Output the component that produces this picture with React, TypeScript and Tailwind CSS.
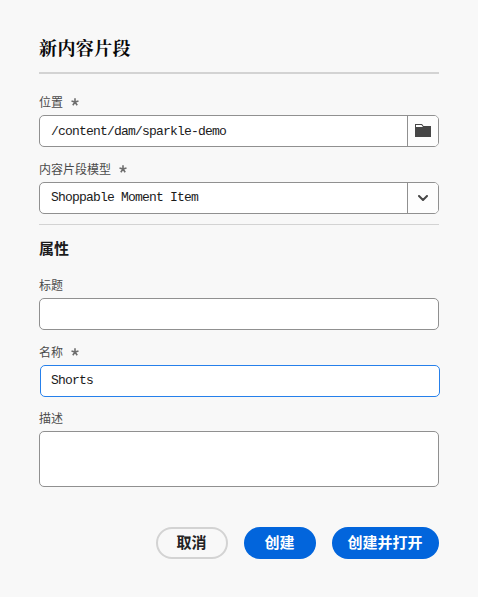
import React from 'react';

const cjk = "font-['Noto_Sans_CJK_SC',sans-serif]";
const field = 'rounded-[5px] border border-[#909090] bg-white';
const value = "font-['Liberation_Mono',monospace] text-[13px] tracking-[-0.8px] text-[#1b1b1b]";

function Asterisk() {
  return (
    <svg width="8" height="8" viewBox="0 0 8 8" className="mb-px ml-2" stroke="#6e6e6e" strokeWidth="1.6" fill="none">
      <path d="M4 4V.3M4 4L.5 2.9M4 4l3.5-1.1M4 4L1.8 7.2M4 4l2.2 3.2" />
    </svg>
  );
}

function Label({ text, required }: { text: string; required?: boolean }) {
  return (
    <div className="flex h-[18px] items-center text-[12px] leading-[18px] text-[#4b4b4b]">
      <span>{text}</span>
      {required && <Asterisk />}
    </div>
  );
}

function Picker({ text, textClass, children }: { text: string; textClass: string; children: React.ReactNode }) {
  return (
    <div className={`flex h-8 overflow-hidden ${field}`}>
      <div className={`flex-1 pl-[11px] whitespace-pre ${textClass} ${value}`}>{text}</div>
      <button className="flex w-[31px] items-center justify-center border-l border-[#909090] bg-[#fdfdfd]">{children}</button>
    </div>
  );
}

export default function App() {
  return (
    <div className={`flex h-[597px] w-[478px] flex-col bg-[#f8f8f8] pr-[39px] pl-[39px] ${cjk}`}>
      <header className="mt-[33px] h-[41px] border-b-2 border-[#d3d3d3]">
        <h1 className="font-['Noto_Serif_CJK_SC','Noto_Sans_CJK_SC',serif] text-[18px] leading-[28px] font-bold tracking-[0.4px] text-[#080808]">新内容片段</h1>
      </header>

      <div className="mt-[19px] flex flex-col gap-1">
        <Label text="位置" required />
        <Picker text="/content/dam/sparkle-demo" textClass="leading-[32px]">
          <svg width="16" height="13" viewBox="0 0 16 13" className="mb-0.5">
            <path d="M0 0h7l1.5 2H16v11H0z" fill="#464646" />
            <path d="M1 1h5.5L8 3H1z" fill="#fdfdfd" />
          </svg>
        </Picker>
      </div>

      <div className="mt-[13px] flex flex-col gap-1">
        <Label text="内容片段模型" required />
        <Picker text="Shoppable Moment Item" textClass="leading-[30px]">
          <svg width="10" height="6" viewBox="0 0 10 6" fill="none" stroke="#464646" strokeWidth="2" strokeLinecap="round" strokeLinejoin="round">
            <path d="M1 1l4 4 4-4" />
          </svg>
        </Picker>
      </div>

      <section className="mt-[10px] border-t border-[#d3d3d3]">
        <h2 className="mt-3 h-[22px] text-[15px] leading-[22px] font-bold text-[#1b1b1b]">属性</h2>

        <div className="mt-[17px] flex flex-col gap-1">
          <Label text="标题" />
          <div className={`h-8 ${field}`} />
        </div>

        <div className="mt-[13px] flex flex-col gap-1">
          <Label text="名称" required />
          <div className={`ml-px -mr-px h-8 rounded-[5px] border border-[#2680eb] bg-white pl-[10px] leading-[30px] ${value}`}>Shorts</div>
        </div>

        <div className="mt-3 flex flex-col gap-1">
          <Label text="描述" />
          <div className={`h-14 ${field}`} />
        </div>
      </section>

      <footer className="mt-10 flex justify-end gap-4 text-[15px] leading-[28px] font-bold">
        <button className="flex h-8 w-[72px] items-center justify-center rounded-full border-2 border-[#d3d3d3] pr-px pb-0.5 text-[#222]">取消</button>
        <button className="flex h-8 w-[72px] items-center justify-center rounded-full bg-[#0265dc] pr-px pb-0.5 text-white">创建</button>
        <button className="flex h-8 w-[107px] items-center justify-center rounded-full bg-[#0265dc] pr-px pb-0.5 text-white">创建并打开</button>
      </footer>
    </div>
  );
}
